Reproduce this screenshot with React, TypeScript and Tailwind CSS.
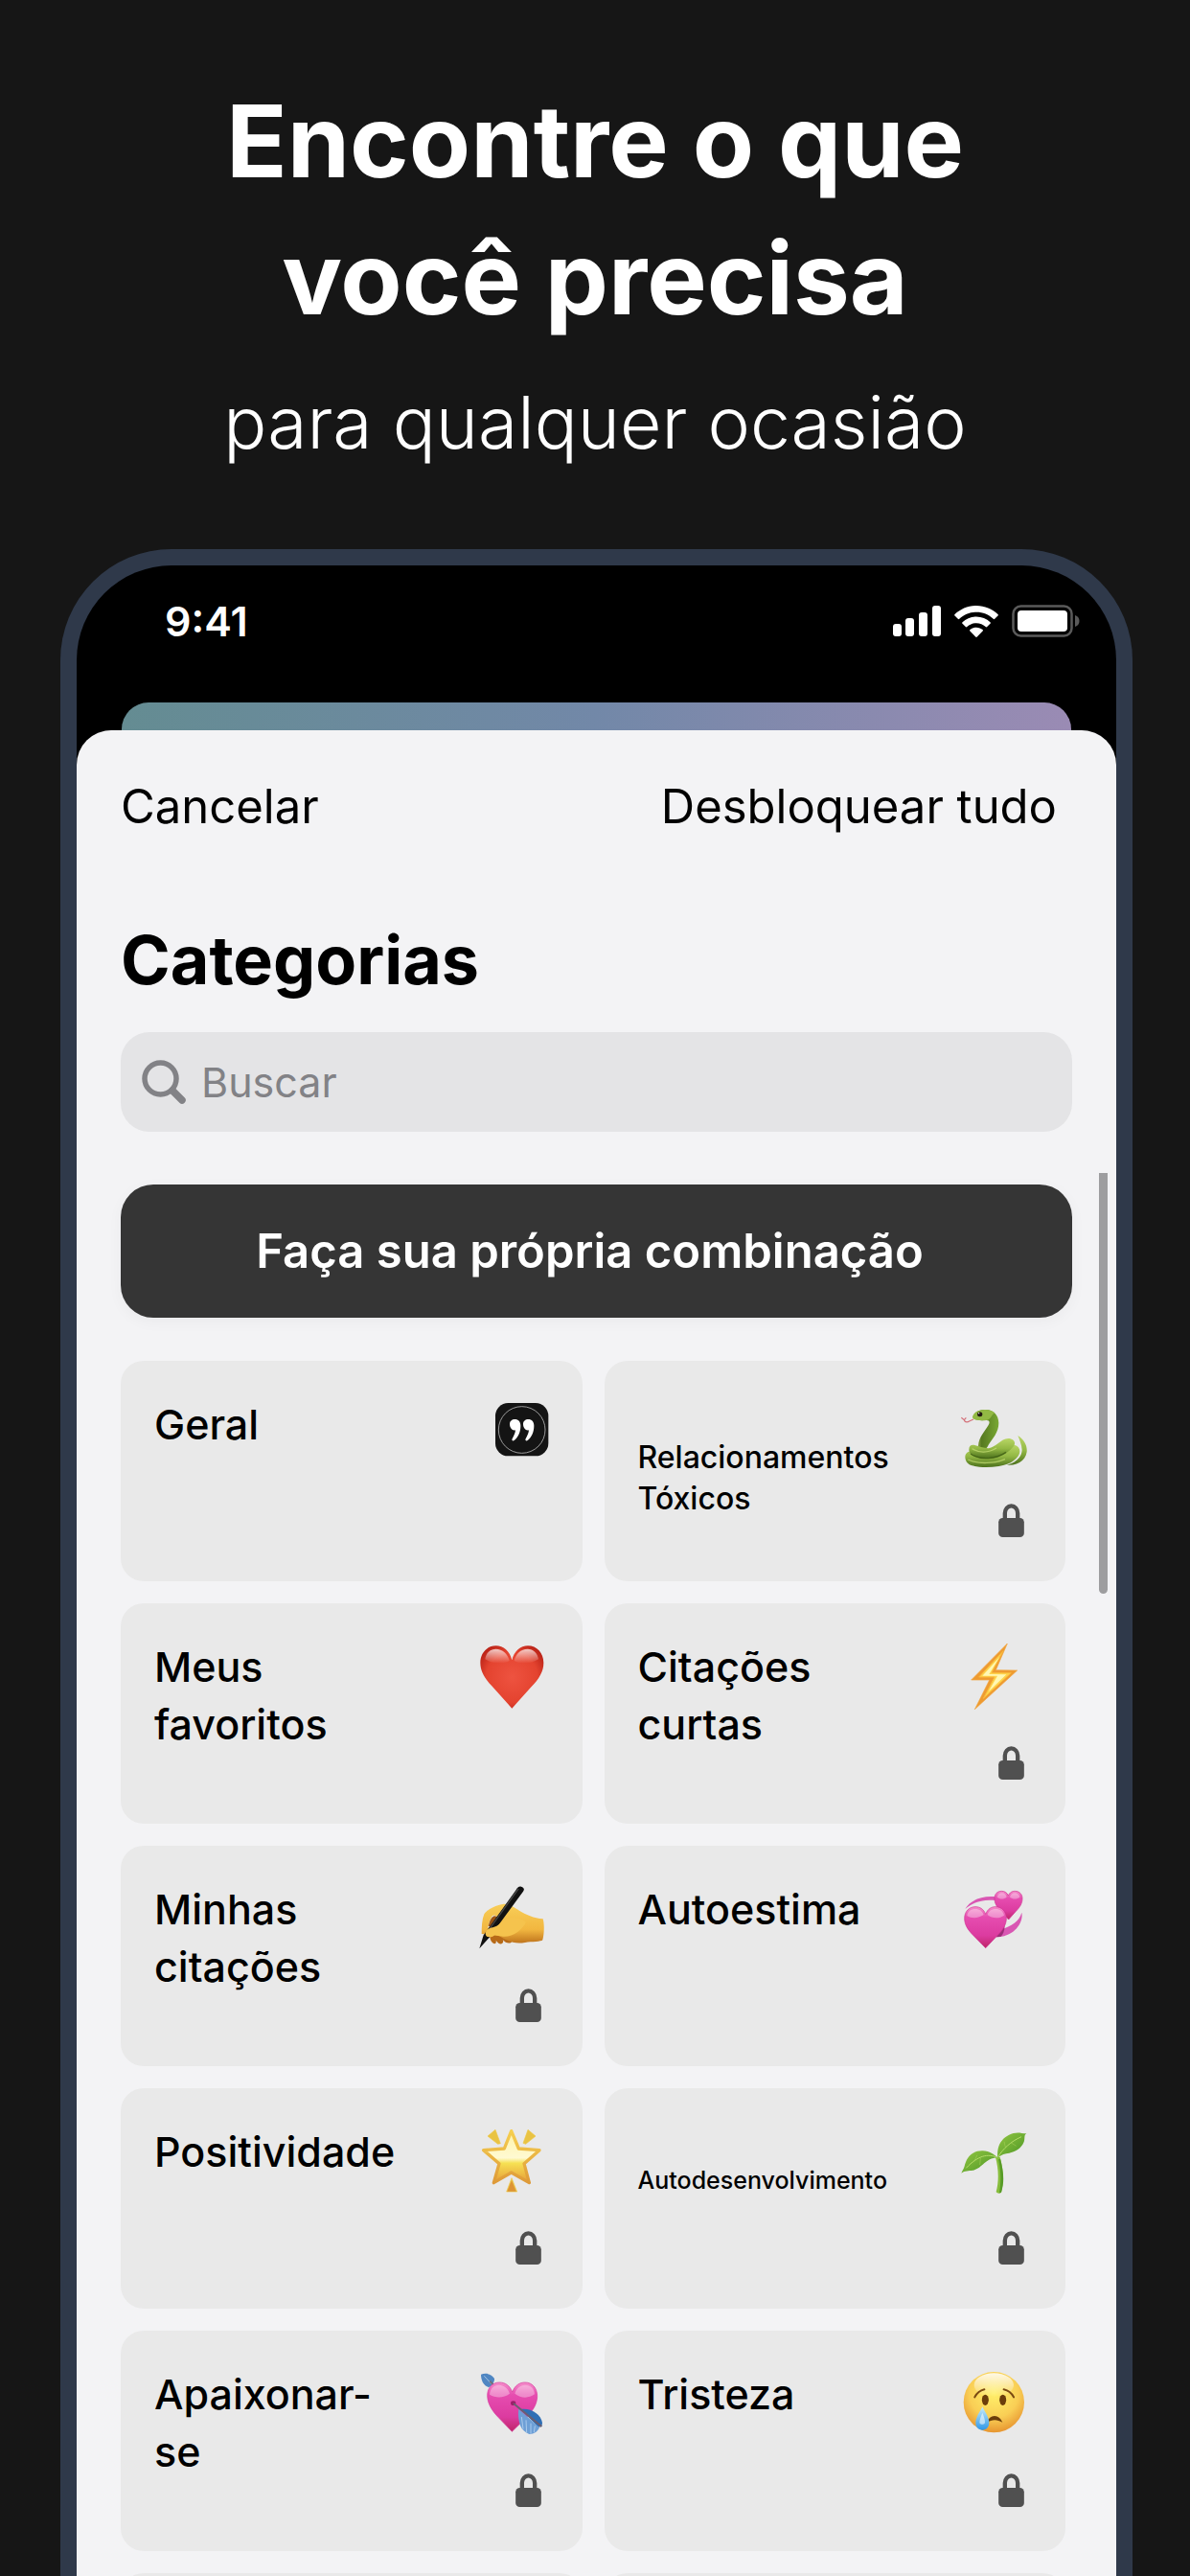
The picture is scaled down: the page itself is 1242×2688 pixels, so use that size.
import React from 'react';

/* ---------- status bar ---------- */

const StatusIcons = () => (
  <div className="flex items-center gap-[14px]">
    <svg viewBox="0 0 50 32" className="w-[50px] h-8" fill="#fff">
      <rect x="0" y="19" width="9" height="13" rx="3" />
      <rect x="13" y="13" width="9" height="19" rx="3" />
      <rect x="27" y="7" width="9" height="25" rx="3" />
      <rect x="41" y="0" width="9" height="32" rx="3" />
    </svg>
    <svg viewBox="0 0 46 33" className="w-[46px] h-[33px]" fill="#fff">
      <path d="M23 0C31.800 0 39.700 3.500 45.500 9c.5.5.5 1 0 1.500l-3.300 3.300c-.5.5-1 .5-1.500 0C36 9.400 29.900 6.800 23 6.800S10 9.400 5.300 13.800c-.5.5-1 .5-1.500 0L.5 10.500c-.5-.5-.5-1 0-1.500C6.300 3.500 14.200 0 23 0Z" />
      <path d="M23 11.500c5.600 0 10.700 2.200 14.500 5.700.5.500.5 1 0 1.500l-3.300 3.300c-.5.500-1 .5-1.500 0-2.600-2.300-5.900-3.700-9.700-3.700s-7.100 1.400-9.700 3.700c-.5.500-1 .5-1.500 0l-3.300-3.300c-.5-.5-.5-1 0-1.500 3.800-3.500 8.900-5.700 14.500-5.700Z" />
      <path d="M23 22.700c2.500 0 4.800.9 6.600 2.400.5.500.5 1 0 1.500l-5.800 5.900c-.5.500-1.100.5-1.600 0l-5.800-5.900c-.5-.5-.5-1 0-1.500 1.800-1.500 4.100-2.400 6.600-2.400Z" />
    </svg>
    <svg viewBox="0 0 71 34" className="w-[71px] h-[34px]">
      <rect x="1.500" y="1.500" width="61" height="31" rx="8" fill="none" stroke="#5a5a5a" strokeWidth="2.500" />
      <rect x="6" y="6" width="52" height="22" rx="4" fill="#fff" />
      <path d="M66 11c3 1 4.500 3 4.500 6s-1.500 5-4.500 6Z" fill="#5a5a5a" />
    </svg>
  </div>
);

const LockIcon = () => (
  <svg viewBox="0 0 80 105" className="w-[27px] h-[35px]">
    <path d="M20 52V30a20 23 0 0 1 40 0v22" fill="none" stroke="#505050" strokeWidth="13" />
    <rect x="0" y="45" width="80" height="60" rx="13" fill="#505050" />
  </svg>
);

const SearchIcon = () => (
  <svg viewBox="0 0 46 46" className="w-[46px] h-[46px] shrink-0" fill="none" stroke="#828286" strokeLinecap="round">
    <circle cx="19.500" cy="19.500" r="16.500" strokeWidth="5.500" />
    <path d="M32 32l10 10" strokeWidth="7.500" />
  </svg>
);

/* ---------- category drawings ---------- */

const QuoteLogo = () => (
  <svg viewBox="51 120 216 216" className="overflow-visible">
    <rect x="108" y="132" width="166" height="166" rx="40" fill="#141414" />
    <circle cx="191" cy="216" r="73" fill="none" stroke="#b5b5b5" strokeWidth="2.500" />
    <path id="q" d="M153 198c0-9 7-15 16-15 11 0 18 8 18 20 0 20-8 36-20 46-4 3-9 0-6-5 5-9 9-17 10-27-10 3-18-8-18-19Z" fill="#fff" />
    <use href="#q" x="42" />
  </svg>
);

const Snake = () => (
  <svg viewBox="66 60 216 216">
    <defs>
      <linearGradient id="sn1" x1="0" y1="0" x2="0" y2="1">
        <stop offset="0" stopColor="#b9d666" />
        <stop offset=".5" stopColor="#94b945" />
        <stop offset="1" stopColor="#4c711c" />
      </linearGradient>
      <linearGradient id="sn2" x1="0" y1="0" x2="1" y2="0">
        <stop offset="0" stopColor="#cdd67c" />
        <stop offset=".35" stopColor="#567a20" />
        <stop offset="1" stopColor="#79a834" />
      </linearGradient>
    </defs>
    <path d="M70 118l9 7 6-7M79 126c3 8 12 6 16 3l13-6" fill="none" stroke="#d4717a" strokeWidth="3.500" />
    <path d="M247 174c20 12 30 32 28 51-4 28-31 44-62 41 28-8 46-24 47-47-1-17-8-32-13-45Z" fill="url(#sn1)" />
    <path d="M82 241c0-14 12-20 28-18h60l66-20c20 5 22 25 8 40-15 17-32 22-57 27-32 5-63 4-86-3-12-4-19-14-19-26Z" fill="url(#sn1)" />
    <path d="M105 117c3-15 17-23 37-24 27-2 44 15 45 41 0 31-20 49-32 69-3 6-5 12-20 18-10 0-15-9-12-16 2-26 20-43 32-64 6-10 2-16-9-15-12 1-37 1-41-9Z" fill="url(#sn2)" />
    <path d="M94 218c0-11 6-17 18-14 14 3 25 9 43 10 23-3 38-30 62-31 17 0 25 13 17 24-13 17-34 31-59 36-31 6-81 2-81-25Z" fill="url(#sn1)" />
    <path d="M105 117c3-15 17-23 37-24 14-1 25 3 33 10-10 3-10 18-23 22-14 3-43 3-47-8Z" fill="#92b944" />
    <path d="M104 215c20 14 50 14 76-2M91 249c32 16 86 12 116-1" fill="none" stroke="#c8df78" strokeWidth="4" opacity=".7" />
    <path d="M99 231c31 22 80 16 111-5" fill="none" stroke="#39570f" strokeWidth="4" opacity=".7" />
    <ellipse cx="128" cy="107" rx="8" ry="7.500" fill="#241a12" />
    <circle cx="125" cy="104" r="2" fill="#fff" />
  </svg>
);

const RedHeart = () => (
  <svg viewBox="51 39 216 216">
    <defs>
      <radialGradient id="rh" cx=".5" cy=".5" r=".62">
        <stop offset="0" stopColor="#ee5340" />
        <stop offset=".65" stopColor="#e4432f" />
        <stop offset="1" stopColor="#b51f15" />
      </radialGradient>
      <linearGradient id="rhs" x1="0" y1="0" x2="0" y2="1">
        <stop offset="0" stopColor="#fff" stopOpacity=".75" />
        <stop offset="1" stopColor="#fff" stopOpacity="0" />
      </linearGradient>
    </defs>
    <path d="M160 97c6-28 27-45 50-45 28 0 49 23 49 53 0 28-14 50-38 75l-61 68-63-70c-23-25-36-46-36-73 0-30 21-53 49-53 23 0 44 17 50 45Z" fill="url(#rh)" />
    <path d="M76 94c3-19 15-32 33-32 22 0 38 16 43 37-22 12-54 10-76-5ZM167 99c5-21 20-37 42-37 18 0 31 13 34 32-22 15-54 17-76 5Z" fill="url(#rhs)" />
  </svg>
);

const Lightning = () => (
  <svg viewBox="66 39 216 216">
    <path d="M214 45l-36 83 67 1L112 251l46-92h-57Z" fill="#ee9a30" stroke="#f2a640" strokeWidth="2" strokeLinejoin="round" />
    <path d="M201 68l-76 82h49l-35 67 87-80-61-1Z" fill="#ffd34b" stroke="#f8b83a" strokeWidth="3" />
    <path d="M190 87l-54 59h47l-28 50 56-54-54-1Z" fill="#fff8b4" />
  </svg>
);

const WritingHand = () => (
  <svg viewBox="51 48 216 216">
    <defs>
      <linearGradient id="wh" x1="0" y1="0" x2="0" y2="1">
        <stop offset="0" stopColor="#f8ce58" />
        <stop offset=".65" stopColor="#f2b740" />
        <stop offset="1" stopColor="#bf741d" />
      </linearGradient>
    </defs>
    <path d="M91 205c-2 14 5 28 14 30 6-1 6-7 5-11 6 10 15 14 20 9 4-3 3-8 1-11 9 11 20 13 27 8 6-4 2-11-2-16l-34-28Z" fill="#b76a18" />
    <path d="M65 204c0-22 1-45 8-62 9-13 31-26 58-31 17-3 38 12 52 20 20 12 46 24 74 26 5 15 4 48-1 66-4 6-34 5-55 8-22 4-39 1-58-8-14-6-24-15-37-15-8 6-17 10-26 3-5-4-6-11-3-17 6-14 26-13 33-20 5-7 8-12 8-18-5-9-13-13-19-9-8 10-12 28-16 45-3 10-10 14-18 12Z" fill="url(#wh)" />
    <path d="M86 180c4-14 8-28 18-32 8 0 14 4 16 10l-18 26Z" fill="#9a5413" />
    <path d="M58 250l13-42 102-142c4-7 9-12 16-10 9 3 11 9 6 15L91 213Z" fill="#111" />
    <path d="M84 196L180 63" stroke="#454545" strokeWidth="4" />
    <path d="M77 200c3-15 23-15 35-21 14-6 19-20 38-25 23-5 41 3 54 13-10 22-40 47-72 45-14-1-21-4-28-3-10 7-28 9-27-9Z" fill="#f5c34d" />
  </svg>
);

const RevolvingHearts = () => (
  <svg viewBox="66 48 216 216">
    <defs>
      <linearGradient id="pk" x1="0" y1="0" x2="0" y2="1">
        <stop offset="0" stopColor="#f58ecb" />
        <stop offset=".25" stopColor="#e64db0" />
        <stop offset=".7" stopColor="#dc3ba0" />
        <stop offset="1" stopColor="#be2667" />
      </linearGradient>
    </defs>
    <path d="M82 126c15-27 53-43 96-38l-1 11c-38-4-68 4-95 27ZM259 137c7 34-27 77-80 77l13-23c36-13 59-25 67-54Z" fill="#d957b3" />
    <path d="M191 191l15-11c-1 13-5 26-12 32l-15 2Z" fill="#9c2c78" />
    <path d="M217 84c5-11 13-14 21-14 14 0 23 10 23 23 0 15-7 27-21 41l-22 25-24-25c-14-15-20-27-20-41 0-14 9-23 22-23 9 0 17 4 21 14Z" fill="url(#pk)" stroke="#cf3291" strokeWidth="2" />
    <path d="M146 142c7-17 18-23 31-23 20 0 34 15 34 36 0 20-11 37-29 55l-36 38-38-39c-18-18-28-34-28-54 0-21 14-36 34-36 14 0 26 7 32 23Z" fill="url(#pk)" stroke="#cf3291" strokeWidth="2" />
    <path d="M88 147c2-14 12-21 26-21 13 0 22 7 26 18-15 11-38 13-52 3ZM152 144c3-11 13-18 25-18 15 0 24 8 27 20-15 11-38 10-52-2ZM182 89c2-9 8-13 15-13 8 0 13 5 15 13-9 7-21 7-30 0ZM222 89c2-8 8-13 15-13 8 0 15 5 16 13-9 7-22 7-31 0Z" fill="#fff" opacity=".35" />
  </svg>
);

const GlowingStar = () => (
  <svg viewBox="51 57 216 216">
    <defs>
      <linearGradient id="st" x1="0" y1="0" x2="0" y2="1">
        <stop offset="0" stopColor="#fff3a8" />
        <stop offset=".52" stopColor="#fffad2" />
        <stop offset=".62" stopColor="#f6e153" />
        <stop offset="1" stopColor="#e69b37" />
      </linearGradient>
      <linearGradient id="sts" x1="0" y1="0" x2="0" y2="1">
        <stop offset="0" stopColor="#f6cf4f" />
        <stop offset="1" stopColor="#de9a38" />
      </linearGradient>
    </defs>
    <path d="M158 71l23 55 65 5-48 42 16 60-56-32-55 32 17-60-49-42 65-5Z" fill="url(#st)" stroke="url(#sts)" strokeWidth="10" strokeLinejoin="round" />
    <path d="M108 67l16 43-8 2-32-25ZM210 67l-15 42 8 3 31-25ZM159 218l17 43h-33Z" fill="#e9c343" stroke="#eec94b" strokeWidth="2" strokeLinejoin="round" />
    <path d="M159 226l14 34h-28Z" fill="#dd9435" />
  </svg>
);

const Seedling = () => (
  <svg viewBox="66 807 216 216">
    <defs>
      <linearGradient id="lf" x1="0" y1="0" x2="1" y2="1">
        <stop offset="0" stopColor="#93c743" />
        <stop offset="1" stopColor="#4a9423" />
      </linearGradient>
    </defs>
    <path d="M177 903l14-1c10 38 14 72 4 111-4 5-12 4-16-1 10-38 7-76-2-109Z" fill="#86bd3c" />
    <path d="M192 908c10 38 14 72 3 105l-6 2c6-39 5-70-3-105Z" fill="#579b27" />
    <path d="M183 904c-10-9-24-20-46-21-40-1-52 27-57 48-2 8-7 14-10 22 12-9 22-7 36-9 30-5 38-38 77-40Z" fill="url(#lf)" />
    <path d="M184 904c-2-17 1-40 13-53 15-17 38-28 62-23 5 1 10 1 15 1-9 5-4 16-8 26-8 21-28 31-46 35-13 2-24 4-36 14Z" fill="url(#lf)" />
    <path d="M183 904c-30-13-60-7-98 33M186 900c15-23 38-46 72-61" fill="none" stroke="#b5dc68" strokeWidth="3" />
    <path d="M110 916l10-20M130 905l-2 22M208 872l-4-18M226 858l16 10" stroke="#b0d860" strokeWidth="2" opacity=".7" />
  </svg>
);

const ArrowHeart = () => (
  <svg viewBox="0 0 216 216">
    <path d="M12 17c14-5 32-3 42 13 1 10-7 24-18 27C20 52 12 36 12 17Z" fill="#4f86c2" />
    <path d="M22 22l30 32" stroke="#a3c2e2" strokeWidth="3" />
    <path d="M40 38l12 13" stroke="#6f747c" strokeWidth="6" />
    <path d="M110 72c9-22 24-30 40-30 22 0 38 17 38 43 0 24-13 45-33 66l-46 45-43-45c-20-21-34-44-34-68 0-25 16-41 38-41 17 0 32 9 40 30Z" fill="url(#pk)" stroke="#d5379a" strokeWidth="2" />
    <path d="M39 80c2-20 13-30 29-30s29 11 34 27c-19 14-43 15-63 3ZM118 77c5-16 16-27 32-27 18 0 29 11 30 29-20 14-42 13-62-2Z" fill="#fff" opacity=".35" />
    <ellipse cx="113" cy="107" rx="8" ry="7" fill="#9b1f68" />
    <path d="M136 126c32-5 64 15 68 43l-2 11-10 2Z" fill="#2f6fb5" />
    <path d="M130 125c18 15 41 38 65 58-5 12-16 21-32 21-12-5-22-13-28-27-5-16-8-35-5-52Z" fill="#6d9fd6" />
    <path d="M139 150l5 38M153 160l2 40M168 170v32M181 178l-3 20" stroke="#a9caec" strokeWidth="3" />
    <path d="M114 108l88 72" stroke="#6b5f71" strokeWidth="6" />
  </svg>
);

const CryingFace = () => (
  <svg viewBox="0 0 216 216">
    <defs>
      <radialGradient id="fc" cx=".5" cy=".35" r=".68">
        <stop offset="0" stopColor="#fff06a" />
        <stop offset=".6" stopColor="#f9ce55" />
        <stop offset="1" stopColor="#e58f2c" />
      </radialGradient>
      <linearGradient id="fcs" x1="0" y1="0" x2="0" y2="1">
        <stop offset="0" stopColor="#fff" stopOpacity=".85" />
        <stop offset="1" stopColor="#fff" stopOpacity="0" />
      </linearGradient>
      <linearGradient id="tr" x1="0" y1="0" x2="0" y2="1">
        <stop offset="0" stopColor="#c8ecfb" />
        <stop offset="1" stopColor="#2f97e8" />
      </linearGradient>
    </defs>
    <circle cx="106" cy="104" r="95" fill="url(#fc)" />
    <ellipse cx="106" cy="50" rx="62" ry="37" fill="url(#fcs)" />
    <ellipse cx="79" cy="97" rx="10.500" ry="17" fill="#6b3d0b" />
    <ellipse cx="134" cy="97" rx="10.500" ry="17" fill="#6b3d0b" />
    <path d="M46 88c7-13 17-21 30-24M137 64c13 3 24 11 31 24" fill="none" stroke="#7b4a12" strokeWidth="6" strokeLinecap="round" />
    <path d="M84 167c5-13 13-20 24-20s19 7 25 20c-17-10-32-10-49 0Z" fill="#6b3d0b" />
    <path d="M70 118c7 15 21 33 21 50 0 14-9 23-21 23s-21-9-21-23c0-17 14-35 21-50Z" fill="url(#tr)" />
    <path d="M70 137c4 10 9 21 8 32-5 6-12 6-17 0 0-11 5-22 9-32Z" fill="#fff" opacity=".55" />
  </svg>
);

/* ---------- data ---------- */

type Size = 'base' | 'small' | 'tiny';

interface Category {
  label: string;
  art: React.FC;
  locked?: boolean;
  size?: Size;
}

const categories: Category[] = [
  { label: 'Geral', art: QuoteLogo },
  { label: 'Relacionamentos Tóxicos', art: Snake, locked: true, size: 'small' },
  { label: 'Meus favoritos', art: RedHeart },
  { label: 'Citações curtas', art: Lightning, locked: true },
  { label: 'Minhas citações', art: WritingHand, locked: true },
  { label: 'Autoestima', art: RevolvingHearts },
  { label: 'Positividade', art: GlowingStar, locked: true },
  { label: 'Autodesenvolvimento', art: Seedling, locked: true, size: 'tiny' },
  { label: 'Apaixonar-se', art: ArrowHeart, locked: true },
  { label: 'Tristeza', art: CryingFace, locked: true },
];

const labelStyles: Record<Size, string> = {
  base: 'pt-[36px] text-[43px] leading-[60px]',
  small: 'pt-[79px] text-[32px] leading-[43px]',
  tiny: 'pt-[79px] text-[25px] leading-[34px]',
};

const CategoryCard = ({ label, art: Art, locked, size = 'base' }: Category) => (
  <button className="flex h-[230px] justify-between rounded-3xl bg-[#e9e9e9] pl-[35px] pr-[38px] text-left">
    <span className={`w-[270px] font-medium text-black ${labelStyles[size]}`}>{label}</span>
    <span className="flex shrink-0 flex-col items-end pt-10">
      <span className="h-[72px] w-[72px]">
        <Art />
      </span>
      {locked && (
        <span className="mt-[37px] mr-[5px]">
          <LockIcon />
        </span>
      )}
    </span>
  </button>
);

export default function App() {
  return (
    <main className="flex h-screen flex-col overflow-hidden bg-[#161616] font-['Inter',sans-serif]">
      {/* Headline */}
      <header className="pt-[75px] text-center text-white">
        <h1 className="text-[105px] font-bold leading-[143px]">
          Encontre o que
          <br />
          você precisa
        </h1>
        <p className="mt-[28px] text-[75px] font-light leading-[104px]">para qualquer ocasião</p>
      </header>

      {/* Phone */}
      <div className="mt-[80px] mr-[60px] ml-[63px] flex flex-1 flex-col overflow-hidden rounded-t-[116px] border-x-[17px] border-t-[17px] border-[#2f394a] bg-black">
        <div className="flex h-[116px] shrink-0 items-center justify-between pr-[38px] pl-[92px]">
          <span className="text-[43px] font-semibold text-white">9:41</span>
          <StatusIcons />
        </div>

        {/* Screen behind the sheet */}
        <div className="mx-[47px] mt-[27px] h-[29px] shrink-0 rounded-t-[28px] bg-linear-to-r from-[#648c92] via-[#7288a8] to-[#9a8bb4]" />

        {/* Sheet */}
        <section className="flex-1 rounded-t-[36px] bg-[#f3f3f5] px-[46px] pt-[50px]">
          <div className="flex justify-between pr-4 text-[49px] leading-[60px] text-black">
            <button>Cancelar</button>
            <button>Desbloquear tudo</button>
          </div>

          <h2 className="mt-[88px] text-[70px] font-bold leading-[84px] text-black">Categorias</h2>

          <label className="mt-[33px] flex h-[104px] items-center gap-4 rounded-[30px] bg-[#e4e4e6] px-[22px]">
            <SearchIcon />
            <input
              type="search"
              aria-label="Buscar"
              placeholder="Buscar"
              className="w-full bg-transparent text-[43px] text-black outline-none placeholder:text-[#828286]"
            />
          </label>

          <div className="relative mt-[55px]">
            <button className="h-[139px] w-full rounded-[34px] bg-[#353535] pr-[14px] text-[49px] font-semibold text-white shadow-[0_4px_16px_rgba(0,0,0,0.04)]">
              Faça sua própria combinação
            </button>

            <div className="mt-[45px] mr-[7px] grid grid-cols-2 gap-[23px]">
              {categories.map((category) => (
                <CategoryCard key={category.label} {...category} />
              ))}
              <div className="h-[230px] rounded-3xl bg-[#e9e9e9]" />
              <div className="h-[230px] rounded-3xl bg-[#e9e9e9]" />
            </div>

            {/* Scrollbar */}
            <div className="absolute -top-3 -right-[37px] h-[439px] w-[9px] rounded-b-full bg-[#9d9d9f]" />
          </div>
        </section>
      </div>
    </main>
  );
}
